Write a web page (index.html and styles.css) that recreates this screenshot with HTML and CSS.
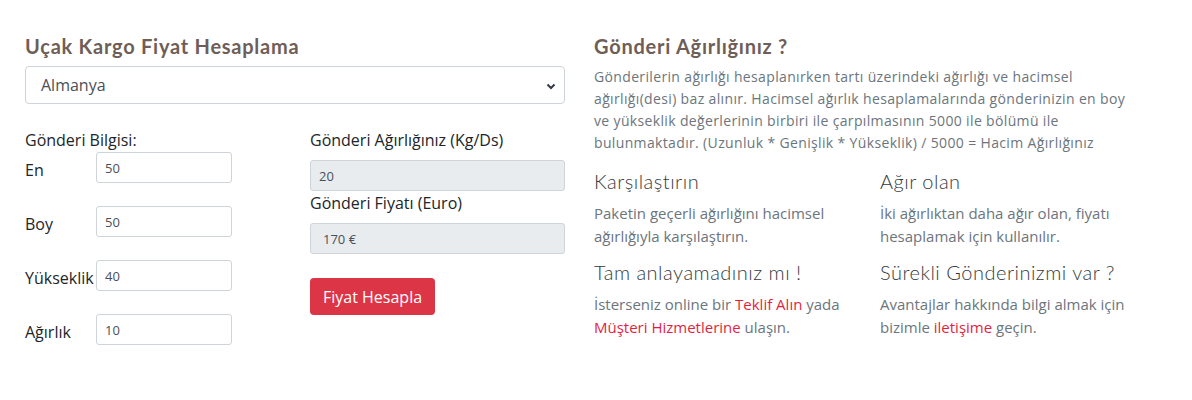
FILE: index.html
```html
<!DOCTYPE html>
<html lang="tr">
<head>
<meta charset="utf-8">
<title>Uçak Kargo Fiyat Hesaplama</title>
<link rel="stylesheet" href="styles.css">
</head>
<body>
<div class="page">
  <section class="calc">
    <h2 class="title">Uçak Kargo Fiyat Hesaplama</h2>
    <div class="select-box">
      <span class="select-text">Almanya</span>
      <svg class="chev" width="10" height="8" viewBox="0 0 10 8"><path d="M1.5 2.5 L5 6 L8.5 2.5" fill="none" stroke="#343a40" stroke-width="2"/></svg>
    </div>
    <div class="calc-grid">
      <div class="dims">
        <div class="lbl">Gönderi Bilgisi:</div>
        <div class="dim-row"><span class="dim-label">En</span><span class="inp">50</span></div>
        <div class="dim-row"><span class="dim-label">Boy</span><span class="inp">50</span></div>
        <div class="dim-row"><span class="dim-label">Yükseklik</span><span class="inp">40</span></div>
        <div class="dim-row"><span class="dim-label">Ağırlık</span><span class="inp">10</span></div>
      </div>
      <div class="results">
        <div class="lbl">Gönderi Ağırlığınız (Kg/Ds)</div>
        <div class="inp ro">20</div>
        <div class="lbl">Gönderi Fiyatı (Euro)</div>
        <div class="inp ro ro2">170 €</div>
        <button class="btn">Fiyat Hesapla</button>
      </div>
    </div>
  </section>
  <section class="info">
    <h2 class="title">Gönderi Ağırlığınız ?</h2>
    <p class="lead">Gönderilerin ağırlığı hesaplanırken tartı üzerindeki ağırlığı ve hacimsel ağırlığı(desi) baz alınır. Hacimsel ağırlık hesaplamalarında gönderinizin en boy ve yükseklik değerlerinin birbiri ile çarpılmasının 5000 ile bölümü ile bulunmaktadır. (Uzunluk * Genişlik * Yükseklik) / 5000 = Hacim Ağırlığınız</p>
    <div class="tips">
      <div class="tip">
        <h3>Karşılaştırın</h3>
        <p>Paketin geçerli ağırlığını hacimsel ağırlığıyla karşılaştırın.</p>
      </div>
      <div class="tip">
        <h3>Ağır olan</h3>
        <p>İki ağırlıktan daha ağır olan, fiyatı hesaplamak için kullanılır.</p>
      </div>
      <div class="tip">
        <h3>Tam anlayamadınız mı !</h3>
        <p>İsterseniz online bir <a href="#">Teklif Alın</a> yada <a href="#">Müşteri Hizmetlerine</a> ulaşın.</p>
      </div>
      <div class="tip">
        <h3>Sürekli Gönderinizmi var ?</h3>
        <p>Avantajlar hakkında bilgi almak için bizimle <a href="#">iletişime</a> geçin.</p>
      </div>
    </div>
  </section>
</div>
</body>
</html>
```
FILE: styles.css
```css
* { box-sizing: border-box; }
body {
  margin: 0;
  background: #fff;
  font-family: "Open Sans", "Liberation Sans", sans-serif;
  color: #212529;
}
.page {
  display: grid;
  grid-template-columns: 540px 571px;
  column-gap: 29px;
  padding: 34px 0 0 25px;
}
.title {
  margin: 0 0 8px;
  font-family: "Lato", "Open Sans", sans-serif;
  font-weight: 700;
  font-size: 20px;
  line-height: 24px;
  letter-spacing: 0.75px;
  color: #6e5e57;
}
.select-box {
  height: 38px;
  border: 1px solid #ced4da;
  border-radius: 4px;
  display: flex;
  align-items: center;
  justify-content: space-between;
  padding: 0 8px 0 15px;
  font-size: 16px;
  color: #495057;
}
.chev { margin-top: 1px; }
.calc-grid {
  display: grid;
  grid-template-columns: 255px 255px;
  column-gap: 30px;
  margin-top: 24px;
}
.lbl {
  font-size: 16px;
  line-height: 24px;
  color: #212529;
}
.dim-row {
  display: flex;
  height: 31px;
  margin-bottom: 23px;
}
.dim-label {
  width: 71px;
  font-size: 16px;
  line-height: 24px;
  padding-top: 6px;
  color: #212529;
}
.inp {
  display: flex;
  align-items: center;
  width: 136px;
  height: 31px;
  border: 1px solid #ced4da;
  border-radius: 3px;
  padding: 0 8px;
  font-size: 13px;
  color: #495057;
}
.results .lbl { margin-bottom: 8px; }
.results .inp.ro { width: 255px; background: #e9ecef; }
.ro2 { padding-left: 12px; }
.btn {
  margin-top: 24px;
  height: 37px;
  padding: 0 13px;
  border: none;
  border-radius: 4px;
  background: #dc3545;
  color: #fff;
  font-family: "Open Sans", "Liberation Sans", sans-serif;
  font-size: 16px;
}
.lead {
  margin: 0 0 15px;
  max-width: 545px;
  font-size: 14px;
  line-height: 22px;
  letter-spacing: 0.35px;
  color: #6c757d;
}
.tips {
  display: grid;
  grid-template-columns: 286px 285px;
  row-gap: 12px;
}
.tip h3 {
  margin: 0 0 9px;
  font-family: "Lato", "Open Sans", sans-serif;
  font-weight: 300;
  font-size: 20px;
  line-height: 24px;
  letter-spacing: 0.5px;
  color: #343a40;
}
.tip p {
  margin: 0;
  padding-right: 30px;
  font-size: 15px;
  line-height: 23px;
  color: #6c757d;
}
.tip a { color: #e41e3f; text-decoration: none; }
```
